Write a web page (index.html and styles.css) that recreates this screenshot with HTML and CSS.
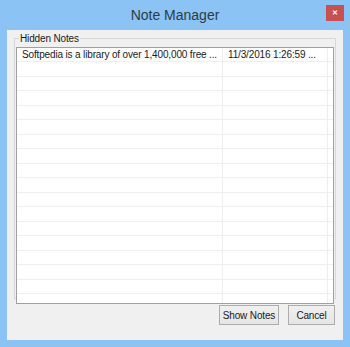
FILE: index.html
```html
<!DOCTYPE html>
<html>
  <head>
    <meta charset="UTF-8">
    <title>Note Manager</title>
    <link rel="stylesheet" href="styles.css">
  </head>
  <body>
    <div class="window">
      <div class="titlebar">
        <span class="title">Note Manager</span>
        <button class="close" type="button">&#x2715;</button>
      </div>
      <div class="client">
        <fieldset class="group">
          <legend>Hidden Notes</legend>
          <div class="list">
            <div class="row">
              <div class="cell c1">Softpedia is a library of over 1,400,000 free ...</div>
              <div class="cell c2">11/3/2016 1:26:59 ...</div>
              <div class="cell c3"></div>
            </div>
            <div class="row"><div class="cell c1"></div><div class="cell c2"></div><div class="cell c3"></div></div>
            <div class="row"><div class="cell c1"></div><div class="cell c2"></div><div class="cell c3"></div></div>
            <div class="row"><div class="cell c1"></div><div class="cell c2"></div><div class="cell c3"></div></div>
            <div class="row"><div class="cell c1"></div><div class="cell c2"></div><div class="cell c3"></div></div>
            <div class="row"><div class="cell c1"></div><div class="cell c2"></div><div class="cell c3"></div></div>
            <div class="row"><div class="cell c1"></div><div class="cell c2"></div><div class="cell c3"></div></div>
            <div class="row"><div class="cell c1"></div><div class="cell c2"></div><div class="cell c3"></div></div>
            <div class="row"><div class="cell c1"></div><div class="cell c2"></div><div class="cell c3"></div></div>
            <div class="row"><div class="cell c1"></div><div class="cell c2"></div><div class="cell c3"></div></div>
            <div class="row"><div class="cell c1"></div><div class="cell c2"></div><div class="cell c3"></div></div>
            <div class="row"><div class="cell c1"></div><div class="cell c2"></div><div class="cell c3"></div></div>
            <div class="row"><div class="cell c1"></div><div class="cell c2"></div><div class="cell c3"></div></div>
            <div class="row"><div class="cell c1"></div><div class="cell c2"></div><div class="cell c3"></div></div>
            <div class="row"><div class="cell c1"></div><div class="cell c2"></div><div class="cell c3"></div></div>
            <div class="row"><div class="cell c1"></div><div class="cell c2"></div><div class="cell c3"></div></div>
            <div class="row"><div class="cell c1"></div><div class="cell c2"></div><div class="cell c3"></div></div>
            <div class="row"><div class="cell c1"></div><div class="cell c2"></div><div class="cell c3"></div></div>
          </div>
        </fieldset>
        <div class="buttons">
          <button type="button" class="btn btn-show">Show Notes</button>
          <button type="button" class="btn btn-cancel">Cancel</button>
        </div>
      </div>
    </div>
  </body>
</html>
```

FILE: styles.css
```css
body {
  margin: 0;
  padding: 0;
  font-family: "Liberation Sans", Arial, sans-serif;
  font-size: 10px;
  letter-spacing: -0.15px;
  color: #1a1a1a;
}

.window {
  box-sizing: border-box;
  width: 350px;
  height: 347px;
  background-color: #8ac3f4;
  padding: 0 7px 7px 7px;
  display: flex;
  flex-direction: column;
}

.titlebar {
  height: 30px;
  display: flex;
  align-items: center;
  justify-content: center;
  position: relative;
}

.title {
  font-size: 14px;
  letter-spacing: 0;
  color: #2e3b46;
  margin-top: -1px;
}

.close {
  position: absolute;
  right: -1px;
  top: 5px;
  width: 18px;
  height: 16px;
  background-color: #c75050;
  border: none;
  color: #fff;
  font-size: 7px;
  font-weight: bold;
  padding: 0;
  line-height: 16px;
}

.client {
  flex: 1;
  background-color: #f0f0f0;
  display: flex;
  flex-direction: column;
  padding: 3px 7px 8px 7px;
}

.group {
  margin: 0;
  padding: 3px 1px 1px 1px;
  border: 1px solid #d8d8d8;
  height: 266px;
  box-sizing: border-box;
}

.group legend {
  padding: 0 1px;
  margin-left: 3px;
  font-size: 10px;
  color: #1a1a1a;
}

.list {
  height: 257px;
  box-sizing: border-box;
  background-color: #fff;
  border: 1px solid #a0a0a0;
  overflow: hidden;
}

.row {
  display: flex;
  height: 14.5px;
  box-sizing: border-box;
  border-bottom: 1px solid #efefef;
}

.row:first-child {
  height: 14px;
}

.cell {
  box-sizing: border-box;
  white-space: nowrap;
  overflow: hidden;
  line-height: 13px;
  border-right: 1px solid #efefef;
}

.c1 {
  width: 206px;
  padding-left: 5px;
}

.c2 {
  width: 105px;
  padding-left: 5px;
}

.c3 {
  flex: 1;
  border-right: none;
}

.buttons {
  display: flex;
  justify-content: flex-end;
  gap: 9px;
  margin-top: 6px;
  padding-right: 1px;
}

.btn {
  height: 20px;
  border: 1px solid #acacac;
  background: linear-gradient(#f0f0f0, #e5e5e5);
  font-family: "Liberation Sans", Arial, sans-serif;
  font-size: 10px;
  letter-spacing: -0.15px;
  white-space: nowrap;
  color: #1a1a1a;
  padding: 0;
}

.btn-show {
  width: 60px;
}

.btn-cancel {
  width: 47px;
}
```
